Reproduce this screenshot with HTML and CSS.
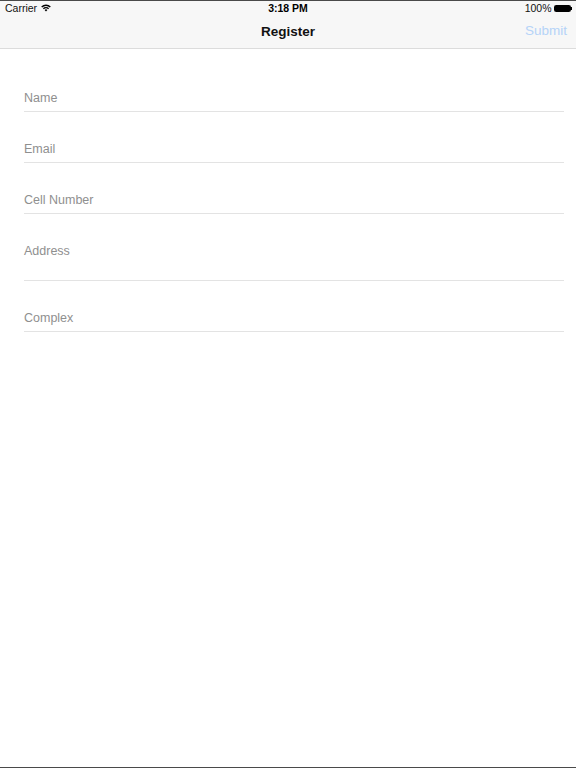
FILE: index.html
```html
<!DOCTYPE html>
<html lang="en">
<head>
<meta charset="utf-8">
<title>Register</title>
<link rel="stylesheet" href="styles.css">
</head>
<body>
<div class="screen">
  <header class="chrome">
    <div class="status">
      <div class="status-left">
        <span class="carrier">Carrier</span>
        <svg class="wifi" width="10" height="8" viewBox="0 0 10 8">
          <path d="M0.2 2.6 A6.8 6.8 0 0 1 9.8 2.6 L8.8 3.6 A5.4 5.4 0 0 0 1.2 3.6 Z" fill="#000"/>
          <path d="M1.9 4.3 A4.4 4.4 0 0 1 8.1 4.3 L7.1 5.3 A3 3 0 0 0 2.9 5.3 Z" fill="#000"/>
          <path d="M3.6 6 A2 2 0 0 1 6.4 6 L5 7.5 Z" fill="#000"/>
        </svg>
      </div>
      <div class="time">3:18 PM</div>
      <div class="status-right">
        <span class="pct">100%</span>
        <span class="battery"><span class="battery-fill"></span></span><span class="battery-tip"></span>
      </div>
    </div>
    <nav class="navbar">
      <div class="nav-side"></div>
      <div class="nav-title">Register</div>
      <div class="nav-side nav-right"><span class="submit">Submit</span></div>
    </nav>
  </header>
  <main class="form">
    <div class="field"><span class="label">Name</span></div>
    <div class="field"><span class="label">Email</span></div>
    <div class="field"><span class="label">Cell Number</span></div>
    <div class="field field-tall"><span class="label">Address</span></div>
    <div class="field"><span class="label">Complex</span></div>
  </main>
</div>
</body>
</html>
```
FILE: styles.css
```css
* { box-sizing: border-box; }
html, body { margin: 0; padding: 0; }
body {
  font-family: "Liberation Sans", Arial, sans-serif;
  background: #fff;
  color: #000;
}
.screen {
  width: 576px;
  height: 768px;
  border-top: 1px solid #4a4a4a;
  border-bottom: 1px solid #4a4a4a;
  background: #fff;
  display: flex;
  flex-direction: column;
}
.chrome {
  background: #f7f7f7;
  border-bottom: 1px solid #dcdcdc;
}
.status {
  height: 14px;
  display: flex;
  align-items: center;
  justify-content: space-between;
  padding: 0 4px 0 5px;
  font-size: 10.5px;
  position: relative;
}
.status-left { display: flex; align-items: center; gap: 4px; }
.carrier { color: #111; }
.wifi { margin-top: -1px; }
.time {
  position: absolute;
  left: 0; right: 0;
  text-align: center;
  font-weight: bold;
  font-size: 10.5px;
  pointer-events: none;
}
.status-right { display: flex; align-items: center; }
.pct { margin-right: 2px; color: #111; }
.battery {
  width: 17px;
  height: 7px;
  border: 1px solid #000;
  border-radius: 1.5px;
  display: inline-flex;
}
.battery-fill { flex: 1; background: #000; }
.battery-tip {
  width: 1.5px;
  height: 3px;
  background: #000;
  display: inline-block;
}
.navbar {
  height: 33px;
  display: flex;
  align-items: center;
  padding: 0 9px 0 9px;
}
.nav-side { flex: 1; }
.nav-right { text-align: right; }
.nav-title {
  font-size: 13.5px;
  font-weight: bold;
  color: #111;
}
.submit {
  font-size: 13.5px;
  color: #b5d3f8;
  position: relative;
  top: -2px;
}
.form {
  padding: 12px 12px 0 24px;
}
.field {
  height: 51px;
  padding-top: 30px;
  border-bottom: 1px solid #e3e3e3;
}
.field-tall { height: 67px; }
.label {
  display: block;
  font-size: 12.5px;
  line-height: 15px;
  color: #8f8f8f;
}
```
